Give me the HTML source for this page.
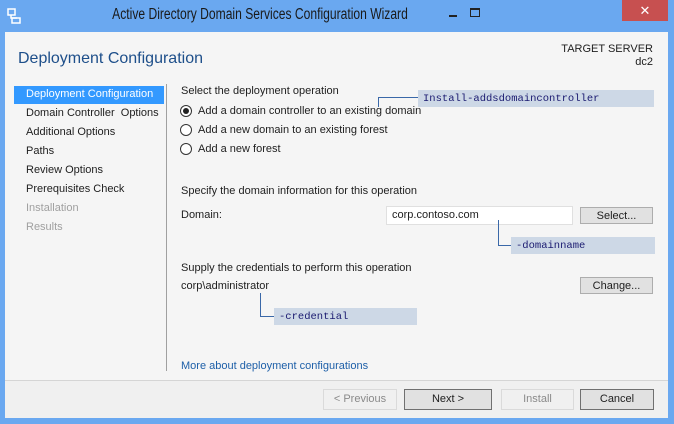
<!DOCTYPE html>
<html><head><style>
*{margin:0;padding:0;box-sizing:border-box}
body{width:674px;height:424px;overflow:hidden;background:#6aa8f0;font-family:"Liberation Sans",sans-serif;font-size:11px;color:#1e1e1e;position:relative}
.a{position:absolute;white-space:nowrap}
.btn{position:absolute;border:1px solid #adadad;background:#e1e1e1;text-align:center;line-height:16px;font-size:11px}
.cb{position:absolute;background:#cdd8e6;font-family:"Liberation Mono",monospace;font-size:10.5px;color:#1a1a70;padding-left:5px;line-height:18px}
.ln{position:absolute;background:#3a68a8}
</style></head><body>
<div class="a" style="left:0;top:0;width:674px;height:31px;background:#6aa8f0"></div>
<svg class="a" style="left:7px;top:8px" width="14" height="16"><rect x="1" y="1" width="7" height="6" fill="none" stroke="#fff" stroke-width="1.5"/><path d="M4 7v3h6" stroke="#fff" fill="none" stroke-width="1.5"/><rect x="5" y="10" width="8" height="5" fill="none" stroke="#fff" stroke-width="1.5"/></svg>
<div class="a" style="left:60px;width:400px;top:6px;text-align:center;font-size:15.5px;color:#1a1a1a;transform:scaleX(0.78);transform-origin:200px 50%">Active Directory Domain Services Configuration Wizard</div>
<div class="a" style="left:449px;top:15px;width:8px;height:2px;background:#222"></div>
<div class="a" style="left:470px;top:8px;width:10px;height:9px;border:1px solid #222;border-top-width:2px"></div>
<div class="a" style="left:622px;top:0;width:46px;height:21px;background:#c75050;color:#fff;text-align:center;font-size:13px;line-height:21px">✕</div>
<div class="a" style="left:5px;top:32px;width:663px;height:348px;background:#f5f5f5"></div>
<div class="a" style="left:5px;top:380px;width:663px;height:38px;background:#f0f0f0;border-top:1px solid #d5d5d5"></div>
<div class="a" style="left:18px;top:50px;font-size:16px;color:#1e4f8a">Deployment Configuration</div>
<div class="a" style="right:21px;top:43px;text-align:right;font-size:11px;line-height:13px">TARGET SERVER<br>dc2</div>
<div class="a" style="left:14px;top:86px;width:150px;height:18px;background:#3399ff"></div>
<div class="a" style="left:26px;top:88px;color:#fff">Deployment Configuration</div>
<div class="a" style="left:26px;top:107px">Domain Controller&nbsp; Options</div>
<div class="a" style="left:26px;top:126px">Additional Options</div>
<div class="a" style="left:26px;top:145px">Paths</div>
<div class="a" style="left:26px;top:164px">Review Options</div>
<div class="a" style="left:26px;top:183px">Prerequisites Check</div>
<div class="a" style="left:26px;top:202px;color:#a0a0a0">Installation</div>
<div class="a" style="left:26px;top:221px;color:#a0a0a0">Results</div>
<div class="a" style="left:166px;top:84px;width:1px;height:287px;background:#a0a0a0"></div>
<div class="a" style="left:181px;top:85px">Select the deployment operation</div>
<div class="a" style="left:180px;top:105px;width:12px;height:12px;border:1px solid #333;border-radius:50%;background:#fff"></div>
<div class="a" style="left:183px;top:108px;width:6px;height:6px;border-radius:50%;background:#222"></div>
<div class="a" style="left:198px;top:105px">Add a domain controller to an existing domain</div>
<div class="a" style="left:180px;top:124px;width:12px;height:12px;border:1px solid #333;border-radius:50%;background:#fff"></div>
<div class="a" style="left:198px;top:124px">Add a new domain to an existing forest</div>
<div class="a" style="left:180px;top:143px;width:12px;height:12px;border:1px solid #333;border-radius:50%;background:#fff"></div>
<div class="a" style="left:198px;top:143px">Add a new forest</div>
<div class="ln" style="left:378px;top:97px;width:1px;height:10px"></div>
<div class="ln" style="left:378px;top:97px;width:40px;height:1px"></div>
<div class="cb" style="left:418px;top:90px;width:236px;height:17px">Install-addsdomaincontroller</div>
<div class="a" style="left:181px;top:185px">Specify the domain information for this operation</div>
<div class="a" style="left:181px;top:209px">Domain:</div>
<div class="a" style="left:386px;top:206px;width:187px;height:19px;background:#fff;border:1px solid #e0e0e0;padding:2px 0 0 5px">corp.contoso.com</div>
<div class="btn" style="left:580px;top:207px;width:73px;height:17px">Select...</div>
<div class="ln" style="left:498px;top:220px;width:1px;height:26px"></div>
<div class="ln" style="left:498px;top:245px;width:13px;height:1px"></div>
<div class="cb" style="left:511px;top:237px;width:144px;height:17px">-domainname</div>
<div class="a" style="left:181px;top:262px">Supply the credentials to perform this operation</div>
<div class="a" style="left:181px;top:280px">corp\administrator</div>
<div class="btn" style="left:580px;top:277px;width:73px;height:17px">Change...</div>
<div class="ln" style="left:260px;top:293px;width:1px;height:24px"></div>
<div class="ln" style="left:260px;top:316px;width:14px;height:1px"></div>
<div class="cb" style="left:274px;top:308px;width:143px;height:17px">-credential</div>
<div class="a" style="left:181px;top:360px;color:#1d5fa8">More about deployment configurations</div>
<div class="btn" style="left:323px;top:389px;width:74px;height:21px;line-height:19px;background:#f0f0f0;border-color:#dadada;color:#8a8a8a">&lt; Previous</div>
<div class="btn" style="left:404px;top:389px;width:88px;height:21px;line-height:19px;border-color:#707070">Next &gt;</div>
<div class="btn" style="left:501px;top:389px;width:73px;height:21px;line-height:19px;background:#f0f0f0;border-color:#dadada;color:#8a8a8a">Install</div>
<div class="btn" style="left:580px;top:389px;width:74px;height:21px;line-height:19px;border-color:#707070">Cancel</div>
</body></html>
